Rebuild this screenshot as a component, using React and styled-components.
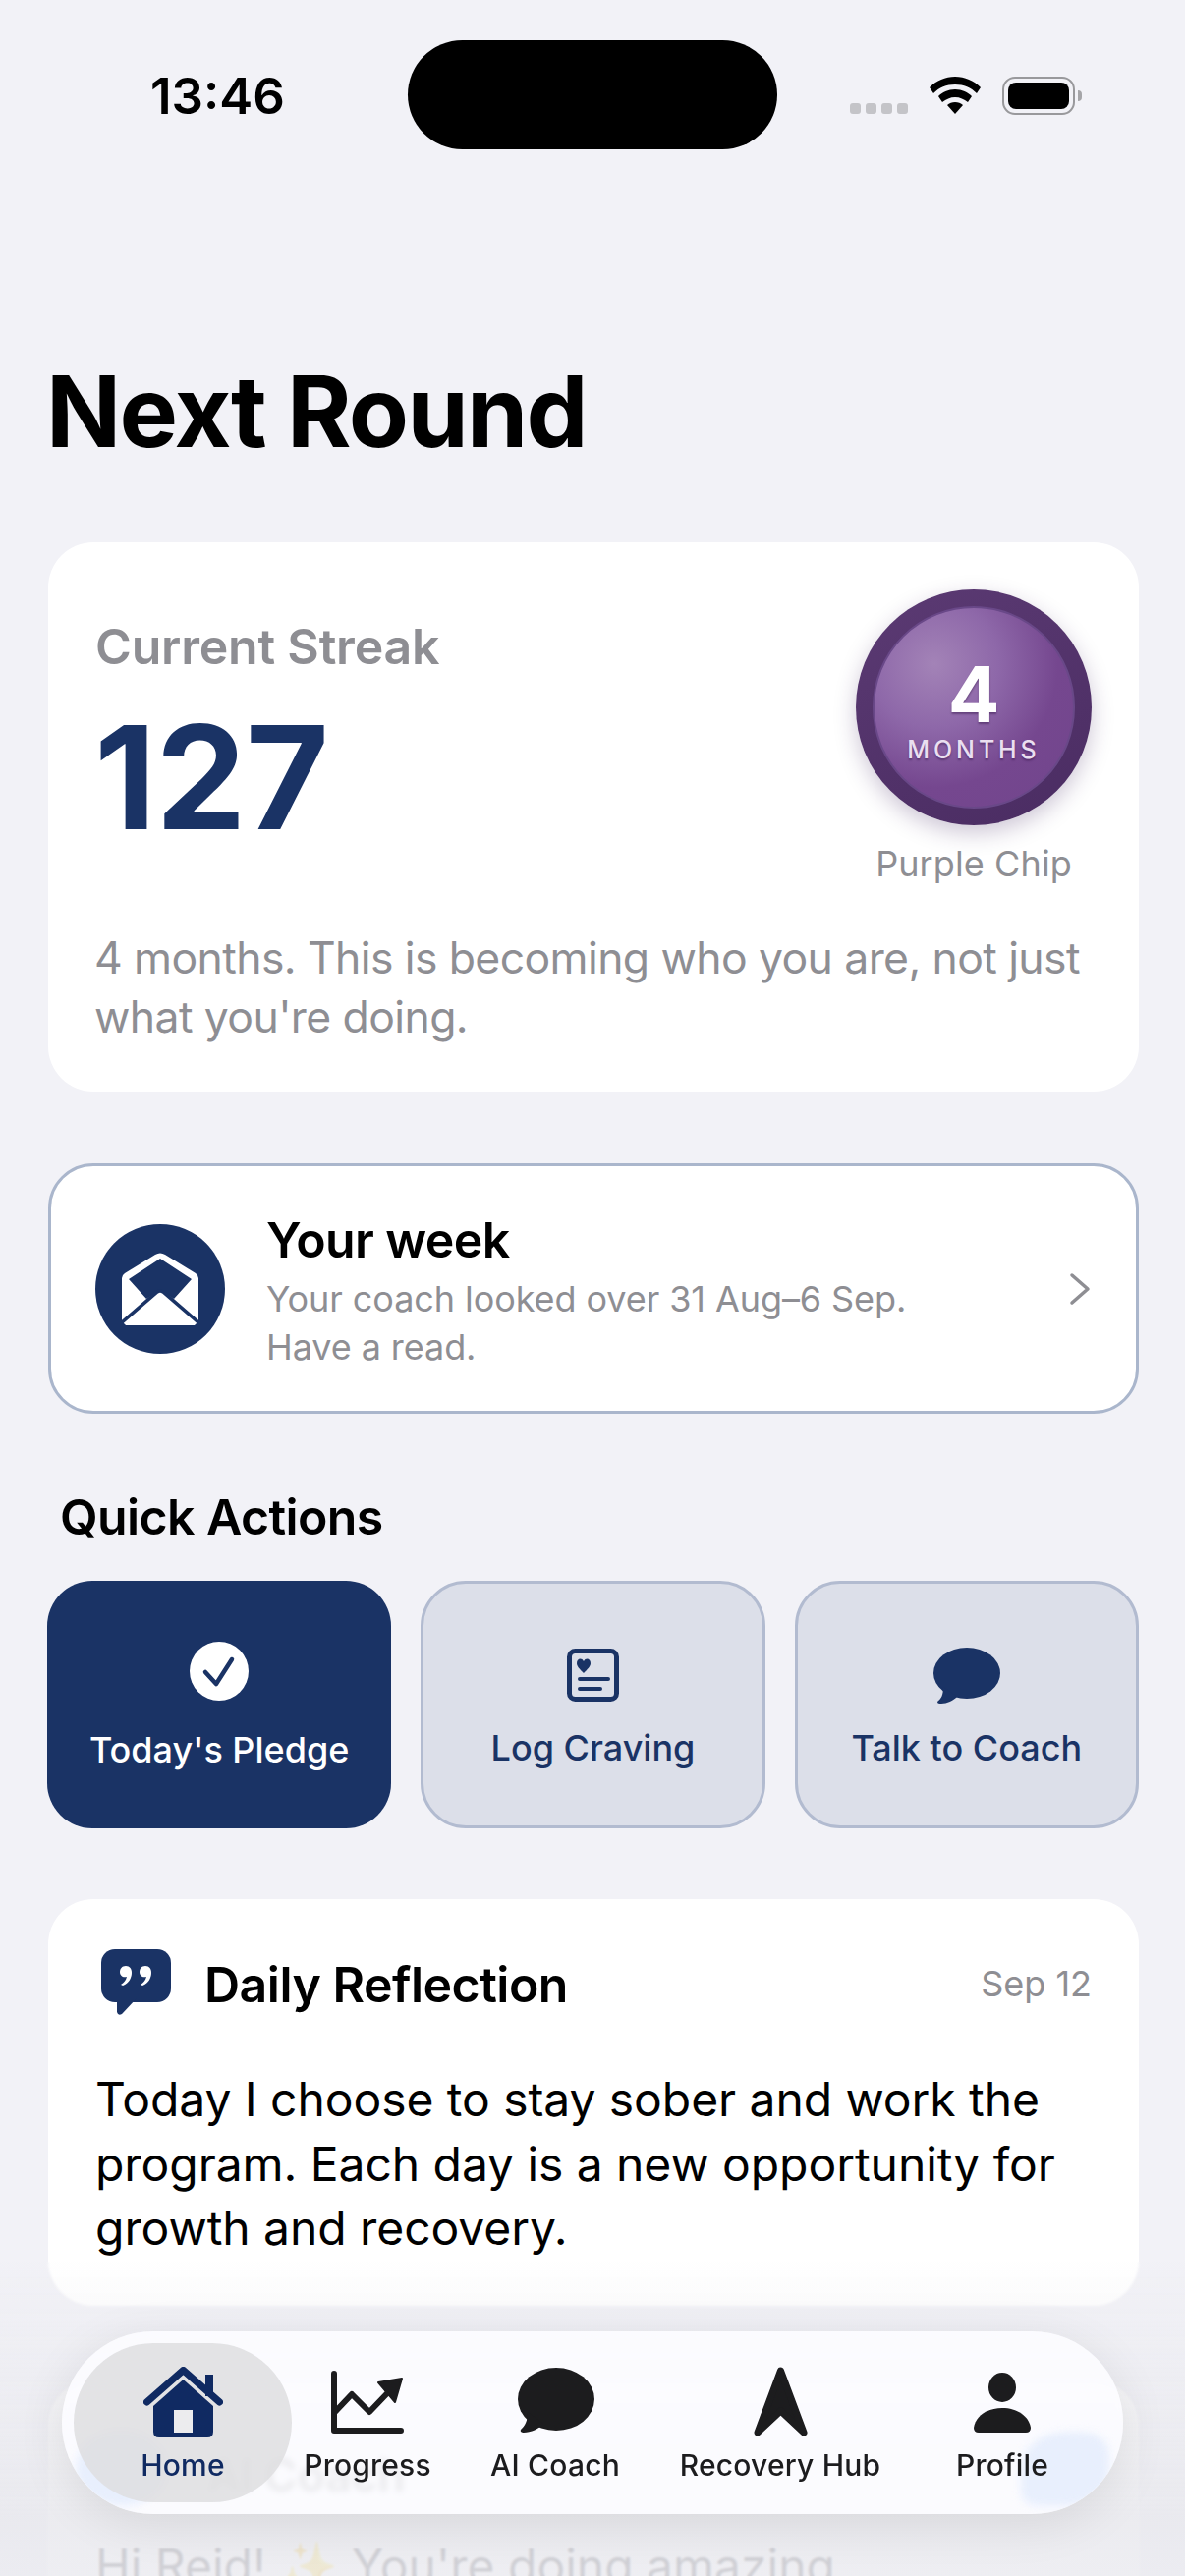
import React from "react";
import styled, { createGlobalStyle } from "styled-components";

const navy = "#1a3365";
const grey = "#8e8e93";
const font = `Inter, "Noto Sans", "Liberation Sans", sans-serif`;

const Global = createGlobalStyle`
  html, body { margin: 0; padding: 0; background: #f2f2f7; }
  * { box-sizing: border-box; }
`;

const Screen = styled.div`
  position: relative;
  width: 1206px;
  height: 2622px;
  overflow: hidden;
  background: #f2f2f7;
  font-family: ${font};
  color: #000;
`;
const StatusBar = styled.div`
  display: grid;
  grid-template-columns: 415px 376px 1fr;
  height: 152px;
  padding-top: 41px;
`;
const Time = styled.div`
  padding: 26px 0 0 153px;
  font-size: 51px;
  line-height: 62px;
  font-weight: 600;
  letter-spacing: 0;
`;
const Island = styled.div`
  height: 111px;
  border-radius: 56px;
  background: #000;
`;
const StatusIcons = styled.div`
  display: flex;
  align-items: flex-start;
  padding: 37px 0 0 74px;
`;
const Dots = styled.div`
  display: flex;
  gap: 5px;
  margin: 27px 22px 0 0;
`;
const Dot = styled.span`
  width: 11px;
  height: 11px;
  border-radius: 3px;
  background: #c4c4c8;
`;
const Battery = styled.div`
  position: relative;
  width: 74px;
  height: 39px;
  margin-left: 22px;
  padding: 4px;
  border: 2.5px solid #99999c;
  border-radius: 13px;
  &::after {
    content: "";
    position: absolute;
    right: -9px;
    top: 12px;
    width: 4px;
    height: 11px;
    border-radius: 0 4px 4px 0;
    background: #a5a5a8;
  }
`;
const BatteryFill = styled.div`
  height: 100%;
  border-radius: 8px;
  background: #000;
`;
const Content = styled.main`
  display: flex;
  flex-direction: column;
  padding: 0 47px 0 49px;
`;
const Title = styled.h1`
  margin: 207px 0 0 -2px;
  font-size: 100px;
  line-height: 120px;
  font-weight: 700;
  letter-spacing: -1.7px;
`;
const Card = styled.section`
  background: #fff;
  border-radius: 46px;
`;
const StreakCard = styled(Card)`
  margin-top: 73px;
  height: 559px;
  padding: 48px 48px 0;
`;
const StreakTop = styled.div`
  display: flex;
  justify-content: space-between;
`;
const StreakLabel = styled.div`
  margin-top: 28px;
  font-size: 50px;
  line-height: 60px;
  font-weight: 600;
  letter-spacing: -0.2px;
  color: ${grey};
`;
const StreakValue = styled.div`
  margin-top: 23px;
  margin-left: -1px;
  font-size: 146px;
  line-height: 160px;
  font-weight: 700;
  letter-spacing: -0.5px;
  color: ${navy};
`;
const ChipColumn = styled.div`
  display: flex;
  flex-direction: column;
  align-items: center;
`;
const Chip = styled.div`
  display: flex;
  align-items: center;
  justify-content: center;
  width: 240px;
  height: 240px;
  border-radius: 50%;
  background: linear-gradient(155deg, #5b3a73, #4a2c62);
  box-shadow: 0 8px 22px rgba(60, 30, 90, 0.25);
`;
const ChipFace = styled.div`
  display: flex;
  flex-direction: column;
  align-items: center;
  width: 206px;
  height: 206px;
  padding-top: 50px;
  border-radius: 50%;
  border: 2px solid #694888;
  background: radial-gradient(circle at 30% 28%, #a383b7 0%, #8e68a9 32%, #75478f 62%, #71458c 100%);
  color: #fff;
`;
const ChipNumber = styled.div`
  font-size: 78px;
  line-height: 76px;
  font-weight: 700;
  text-shadow: 0 2px 2px rgba(50, 20, 70, 0.45);
`;
const ChipUnit = styled.div`
  margin-top: 3px;
  font-size: 25px;
  line-height: 30px;
  font-weight: 500;
  letter-spacing: 3.9px;
  color: #eadff0;
  text-shadow: 0 2px 2px rgba(50, 20, 70, 0.45);
`;
const ChipName = styled.div`
  margin-top: 17px;
  font-size: 36px;
  line-height: 44px;
  font-weight: 400;
  letter-spacing: 0.1px;
  color: ${grey};
`;
const StreakText = styled.p`
  margin: 44px 0 0 -1px;
  font-size: 44.5px;
  line-height: 60px;
  letter-spacing: -0.6px;
  color: ${grey};
`;
const WeekCard = styled(Card)`
  display: flex;
  align-items: center;
  height: 255px;
  margin-top: 73px;
  padding: 0 46px 0 45px;
  border: 3px solid #aab6cc;
`;
const WeekIcon = styled.div`
  display: flex;
  align-items: center;
  justify-content: center;
  width: 132px;
  height: 132px;
  border-radius: 50%;
  background: ${navy};
`;
const WeekBody = styled.div`
  flex: 1;
  margin-left: 42px;
  padding-top: 4px;
`;
const WeekTitle = styled.div`
  font-size: 50px;
  line-height: 62px;
  font-weight: 600;
  letter-spacing: -0.6px;
`;
const WeekSub = styled.div`
  margin-top: 5px;
  font-size: 36px;
  line-height: 49px;
  letter-spacing: -0.08px;
  color: ${grey};
`;
const SectionTitle = styled.h2`
  margin: 74px 0 0 12px;
  font-size: 50px;
  line-height: 62px;
  font-weight: 600;
  letter-spacing: -0.6px;
`;
const Tiles = styled.div`
  display: grid;
  grid-template-columns: repeat(3, 1fr);
  gap: 30px;
  margin: 34px 0 0 -1px;
`;
const Tile = styled.button`
  display: flex;
  flex-direction: column;
  align-items: center;
  height: 252px;
  padding: ${(p) => (p.$primary ? "62px" : "63px")} 0 0;
  border-radius: 46px;
  border: ${(p) => (p.$primary ? "none" : "3px solid #b2bbd0")};
  background: ${(p) => (p.$primary ? navy : "#dcdfe9")};
  color: ${(p) => (p.$primary ? "#fff" : navy)};
  font-family: inherit;
`;
const TileIcon = styled.div`
  display: flex;
  align-items: center;
  justify-content: center;
  height: 60px;
`;
const TileLabel = styled.div`
  margin-top: ${(p) => (p.$primary ? "26px" : "20px")};
  font-size: 36px;
  line-height: 48px;
  font-weight: 500;
`;
const ReflectionCard = styled(Card)`
  height: 414px;
  margin-top: 72px;
  padding: 51px 48px 0 54px;
`;
const ReflectionHead = styled.div`
  display: flex;
  align-items: flex-start;
`;
const ReflectionTitle = styled.div`
  flex: 1;
  margin: 5px 0 0 34px;
  font-size: 50px;
  line-height: 62px;
  font-weight: 600;
  letter-spacing: -0.5px;
`;
const ReflectionDate = styled.div`
  margin-top: 13px;
  font-size: 36px;
  line-height: 44px;
  color: ${grey};
`;
const ReflectionText = styled.p`
  margin: 53px 0 0 -6px;
  font-size: 48px;
  line-height: 65.5px;
  letter-spacing: -0.06px;
`;
const CoachCard = styled(Card)`
  height: 320px;
  margin-top: 76px;
  padding: 52px 50px 0 48px;
`;
const CoachHead = styled.div`
  position: relative;
  z-index: 1;
  height: 75px;
  padding: 14px 0 0 114px;
  font-size: 46px;
  line-height: 60px;
  font-weight: 600;
  color: #1c1c1e;
`;
const CoachText = styled.p`
  margin: 32px 0 0;
  font-size: 48px;
  line-height: 60px;
  color: #3c3c43;
`;
const BottomFade = styled.div`
  position: absolute;
  left: 0;
  right: 0;
  bottom: 0;
  height: 320px;
  backdrop-filter: blur(1px);
  background: linear-gradient(
    to bottom,
    rgba(232, 232, 237, 0) 0%,
    rgba(232, 232, 237, 0.2) 15%,
    rgba(232, 232, 237, 0.85) 81%,
    rgba(235, 235, 240, 0.85) 100%
  );
`;
const Nav = styled.nav`
  position: absolute;
  z-index: 2;
  left: 63px;
  top: 2373px;
  display: grid;
  grid-template-columns: 222px 154px 228px 230px 222px;
  width: 1080px;
  height: 186px;
  padding: 12px;
  border-radius: 93px;
  background: rgba(252, 252, 255, 0.92);
  backdrop-filter: blur(3px);
  box-shadow: 0 10px 50px rgba(0, 0, 0, 0.09);
  overflow: hidden;
  &::before,
  &::after {
    content: "";
    position: absolute;
    top: 102px;
    height: 76px;
    background: #e8effd;
    filter: blur(4px);
  }
  &::before {
    left: 14px;
    width: 92px;
    border-radius: 50%;
  }
  &::after {
    right: 14px;
    width: 90px;
    border-radius: 50% 30% 50% 20%;
  }
`;
const NavItem = styled.div`
  position: relative;
  z-index: 1;
  display: flex;
  flex-direction: column;
  align-items: center;
  height: 162px;
  padding-top: 24px;
  border-radius: 81px;
  background: ${(p) => (p.$active ? "rgba(222,222,225,0.85)" : "transparent")};
  color: ${(p) => (p.$active ? "#102a62" : "#1c1c1e")};
`;
const NavIcon = styled.div`
  display: flex;
  align-items: flex-start;
  justify-content: center;
  height: 82px;
  padding-top: ${(p) => p.$top}px;
`;
const NavLabel = styled.div`
  font-size: 30px;
  line-height: 36px;
  font-weight: 500;
  letter-spacing: 0.2px;
  white-space: nowrap;
`;

const Wifi = () => (
  <svg width="52" height="38" viewBox="0 0 52 38">
    <path fill="#000" d="M26 0C16 0 7 4 0 11l4 6c6-6 13-9 22-9s16 3 22 9l4-6C45 4 36 0 26 0Z" />
    <path fill="#000" d="M26 13c-7 0-13 3-17 7l4 6c4-3 8-5 13-5s9 2 13 5l4-6c-4-4-10-7-17-7Z" />
    <path fill="#000" d="M26 26c-3 0-6 1-8 3l8 9 8-9c-2-2-5-3-8-3Z" />
  </svg>
);
const Envelope = () => (
  <svg width="78" height="74" viewBox="0 0 78 74">
    <path fill="#fff" d="M0 26Q0 23 3 21L34 2Q39-1 44 2L75 21Q78 23 78 26V70Q78 74 74 74H4Q0 74 0 70Z" />
    <path fill={navy} d="M39 6L71 27L53 47L39 38L25 47L7 27Z" />
    <path fill="none" stroke={navy} strokeWidth="3.6" d="M-1 72L36 40Q39 38 42 40L79 72" />
    <path fill={navy} d="M0 70V74H4ZM78 70V74H74Z" />
  </svg>
);
const Chevron = () => (
  <svg width="22" height="34" viewBox="0 0 22 34">
    <path fill="none" stroke="#8e8e93" strokeWidth="3.5" strokeLinecap="round" strokeLinejoin="round" d="M3 3L19 17L3 31" />
  </svg>
);
const CheckIcon = () => (
  <svg width="60" height="60" viewBox="0 0 60 60">
    <circle cx="30" cy="30" r="30" fill="#fff" />
    <path fill="none" stroke={navy} strokeWidth="4.5" strokeLinecap="round" strokeLinejoin="round" d="M16 31L27 43L43 18" />
  </svg>
);
const JournalIcon = () => (
  <svg width="53" height="54" viewBox="0 0 53 54">
    <rect x="2.5" y="2.5" width="48" height="49" rx="6" fill="none" stroke={navy} strokeWidth="5" />
    <path fill={navy} d="M17 25C13 21 10 18 10 15C10 10 15 9 17 13C19 9 24 10 24 15C24 18 21 21 17 25Z" />
    <path stroke={navy} strokeWidth="4" strokeLinecap="round" d="M13 31H42M13 41H34" />
  </svg>
);
const TalkIcon = () => (
  <svg width="68" height="57" viewBox="0 0 68 57">
    <ellipse cx="34" cy="26" rx="34" ry="26" fill={navy} />
    <path fill={navy} d="M10 40C10 48 8 52 4 55C4 57 6 57 8 57C14 57 20 54 24 50Z" />
  </svg>
);
const QuoteIcon = () => (
  <svg width="71" height="67" viewBox="0 0 71 67">
    <rect width="71" height="54" rx="14" fill={navy} />
    <path fill={navy} d="M16 50V64Q17 68 21 66L36 50Z" />
    <path fill="#fff" d="M25 17C21 17 19 20 19 23C19 27 22 29 26 28C25 32 23 34 20 36L22 37C28 35 31 29 31 24C31 20 29 17 25 17Z" />
    <path fill="#fff" d="M45 17C41 17 39 20 39 23C39 27 42 29 46 28C45 32 43 34 40 36L42 37C48 35 51 29 51 24C51 20 49 17 45 17Z" />
  </svg>
);
const HomeIcon = () => (
  <svg width="81" height="72" viewBox="0 0 81 72">
    <path fill="#102a62" d="M63 8H71V30H63Z" />
    <path fill="none" stroke="#102a62" strokeWidth="7" strokeLinecap="round" strokeLinejoin="round" d="M3.5 36L40.5 3.5L77.5 36" />
    <path fill="#102a62" d="M40.5 13L71 40V66Q71 72 65 72H16Q10 72 10 66V40Z" />
    <rect x="31" y="44" width="19" height="23" fill="#ececee" />
  </svg>
);
const ProgressIcon = () => (
  <svg width="74" height="64" viewBox="0 0 74 64">
    <path fill="none" stroke="#1c1c1e" strokeWidth="6" strokeLinecap="round" strokeLinejoin="round" d="M3 3V61H71" />
    <path fill="none" stroke="#1c1c1e" strokeWidth="6" strokeLinejoin="round" d="M3 43L21 24L39 42L60 20" />
    <path fill="#1c1c1e" stroke="#1c1c1e" strokeWidth="2" strokeLinejoin="round" d="M48 12L72 8L65 32Z" />
  </svg>
);
const CoachIcon = () => (
  <svg width="80" height="67" viewBox="0 0 80 67">
    <ellipse cx="41" cy="33" rx="39" ry="32" fill="#1c1c1e" />
    <path fill="#1c1c1e" d="M12 46C12 56 9 60 5 64C4 66 6 67 8 67C15 67 24 63 28 58Z" />
  </svg>
);
const ArrowIcon = () => (
  <svg width="55" height="72" viewBox="0 0 55 72">
    <path fill="#1c1c1e" stroke="#1c1c1e" strokeWidth="7" strokeLinejoin="round" d="M27.5 4L51 67L27.5 45L4 67Z" />
  </svg>
);
const PersonIcon = () => (
  <svg width="58" height="61" viewBox="0 0 58 61">
    <ellipse cx="29" cy="15" rx="14" ry="15" fill="#1c1c1e" />
    <path fill="#1c1c1e" d="M5 61H53Q58 61 58 56C56 44 44 36 29 36C14 36 2 44 0 56Q0 61 5 61Z" />
  </svg>
);

const navItems = [
  { label: "Home", icon: <HomeIcon />, active: true, top: 0 },
  { label: "Progress", icon: <ProgressIcon />, top: 4 },
  { label: "AI Coach", icon: <CoachIcon />, top: 0 },
  { label: "Recovery Hub", icon: <ArrowIcon />, top: 0 },
  { label: "Profile", icon: <PersonIcon />, top: 6 },
];

export default function App() {
  return (
    <Screen>
      <Global />
      <StatusBar>
        <Time>13:46</Time>
        <Island />
        <StatusIcons>
          <Dots><Dot /><Dot /><Dot /><Dot /></Dots>
          <Wifi />
          <Battery><BatteryFill /></Battery>
        </StatusIcons>
      </StatusBar>
      <Content>
        <Title>Next Round</Title>
        <StreakCard>
          <StreakTop>
            <div>
              <StreakLabel>Current Streak</StreakLabel>
              <StreakValue>127</StreakValue>
            </div>
            <ChipColumn>
              <Chip>
                <ChipFace>
                  <ChipNumber>4</ChipNumber>
                  <ChipUnit>MONTHS</ChipUnit>
                </ChipFace>
              </Chip>
              <ChipName>Purple Chip</ChipName>
            </ChipColumn>
          </StreakTop>
          <StreakText>4 months. This is becoming who you are, not just what you're doing.</StreakText>
        </StreakCard>
        <WeekCard>
          <WeekIcon><Envelope /></WeekIcon>
          <WeekBody>
            <WeekTitle>Your week</WeekTitle>
            <WeekSub>Your coach looked over 31 Aug–6 Sep.<br />Have a read.</WeekSub>
          </WeekBody>
          <Chevron />
        </WeekCard>
        <SectionTitle>Quick Actions</SectionTitle>
        <Tiles>
          <Tile $primary>
            <TileIcon><CheckIcon /></TileIcon>
            <TileLabel $primary>Today's Pledge</TileLabel>
          </Tile>
          <Tile>
            <TileIcon><JournalIcon /></TileIcon>
            <TileLabel>Log Craving</TileLabel>
          </Tile>
          <Tile>
            <TileIcon><TalkIcon /></TileIcon>
            <TileLabel>Talk to Coach</TileLabel>
          </Tile>
        </Tiles>
        <ReflectionCard>
          <ReflectionHead>
            <QuoteIcon />
            <ReflectionTitle>Daily Reflection</ReflectionTitle>
            <ReflectionDate>Sep 12</ReflectionDate>
          </ReflectionHead>
          <ReflectionText>Today I choose to stay sober and work the program. Each day is a new opportunity for growth and recovery.</ReflectionText>
        </ReflectionCard>
        <CoachCard>
          <CoachHead>AI Coach</CoachHead>
          <CoachText>Hi Reid! ✨ You're doing amazing</CoachText>
        </CoachCard>
      </Content>
      <BottomFade />
      <Nav>
        {navItems.map((item) => (
          <NavItem key={item.label} $active={item.active}>
            <NavIcon $top={item.top}>{item.icon}</NavIcon>
            <NavLabel>{item.label}</NavLabel>
          </NavItem>
        ))}
      </Nav>
    </Screen>
  );
}
